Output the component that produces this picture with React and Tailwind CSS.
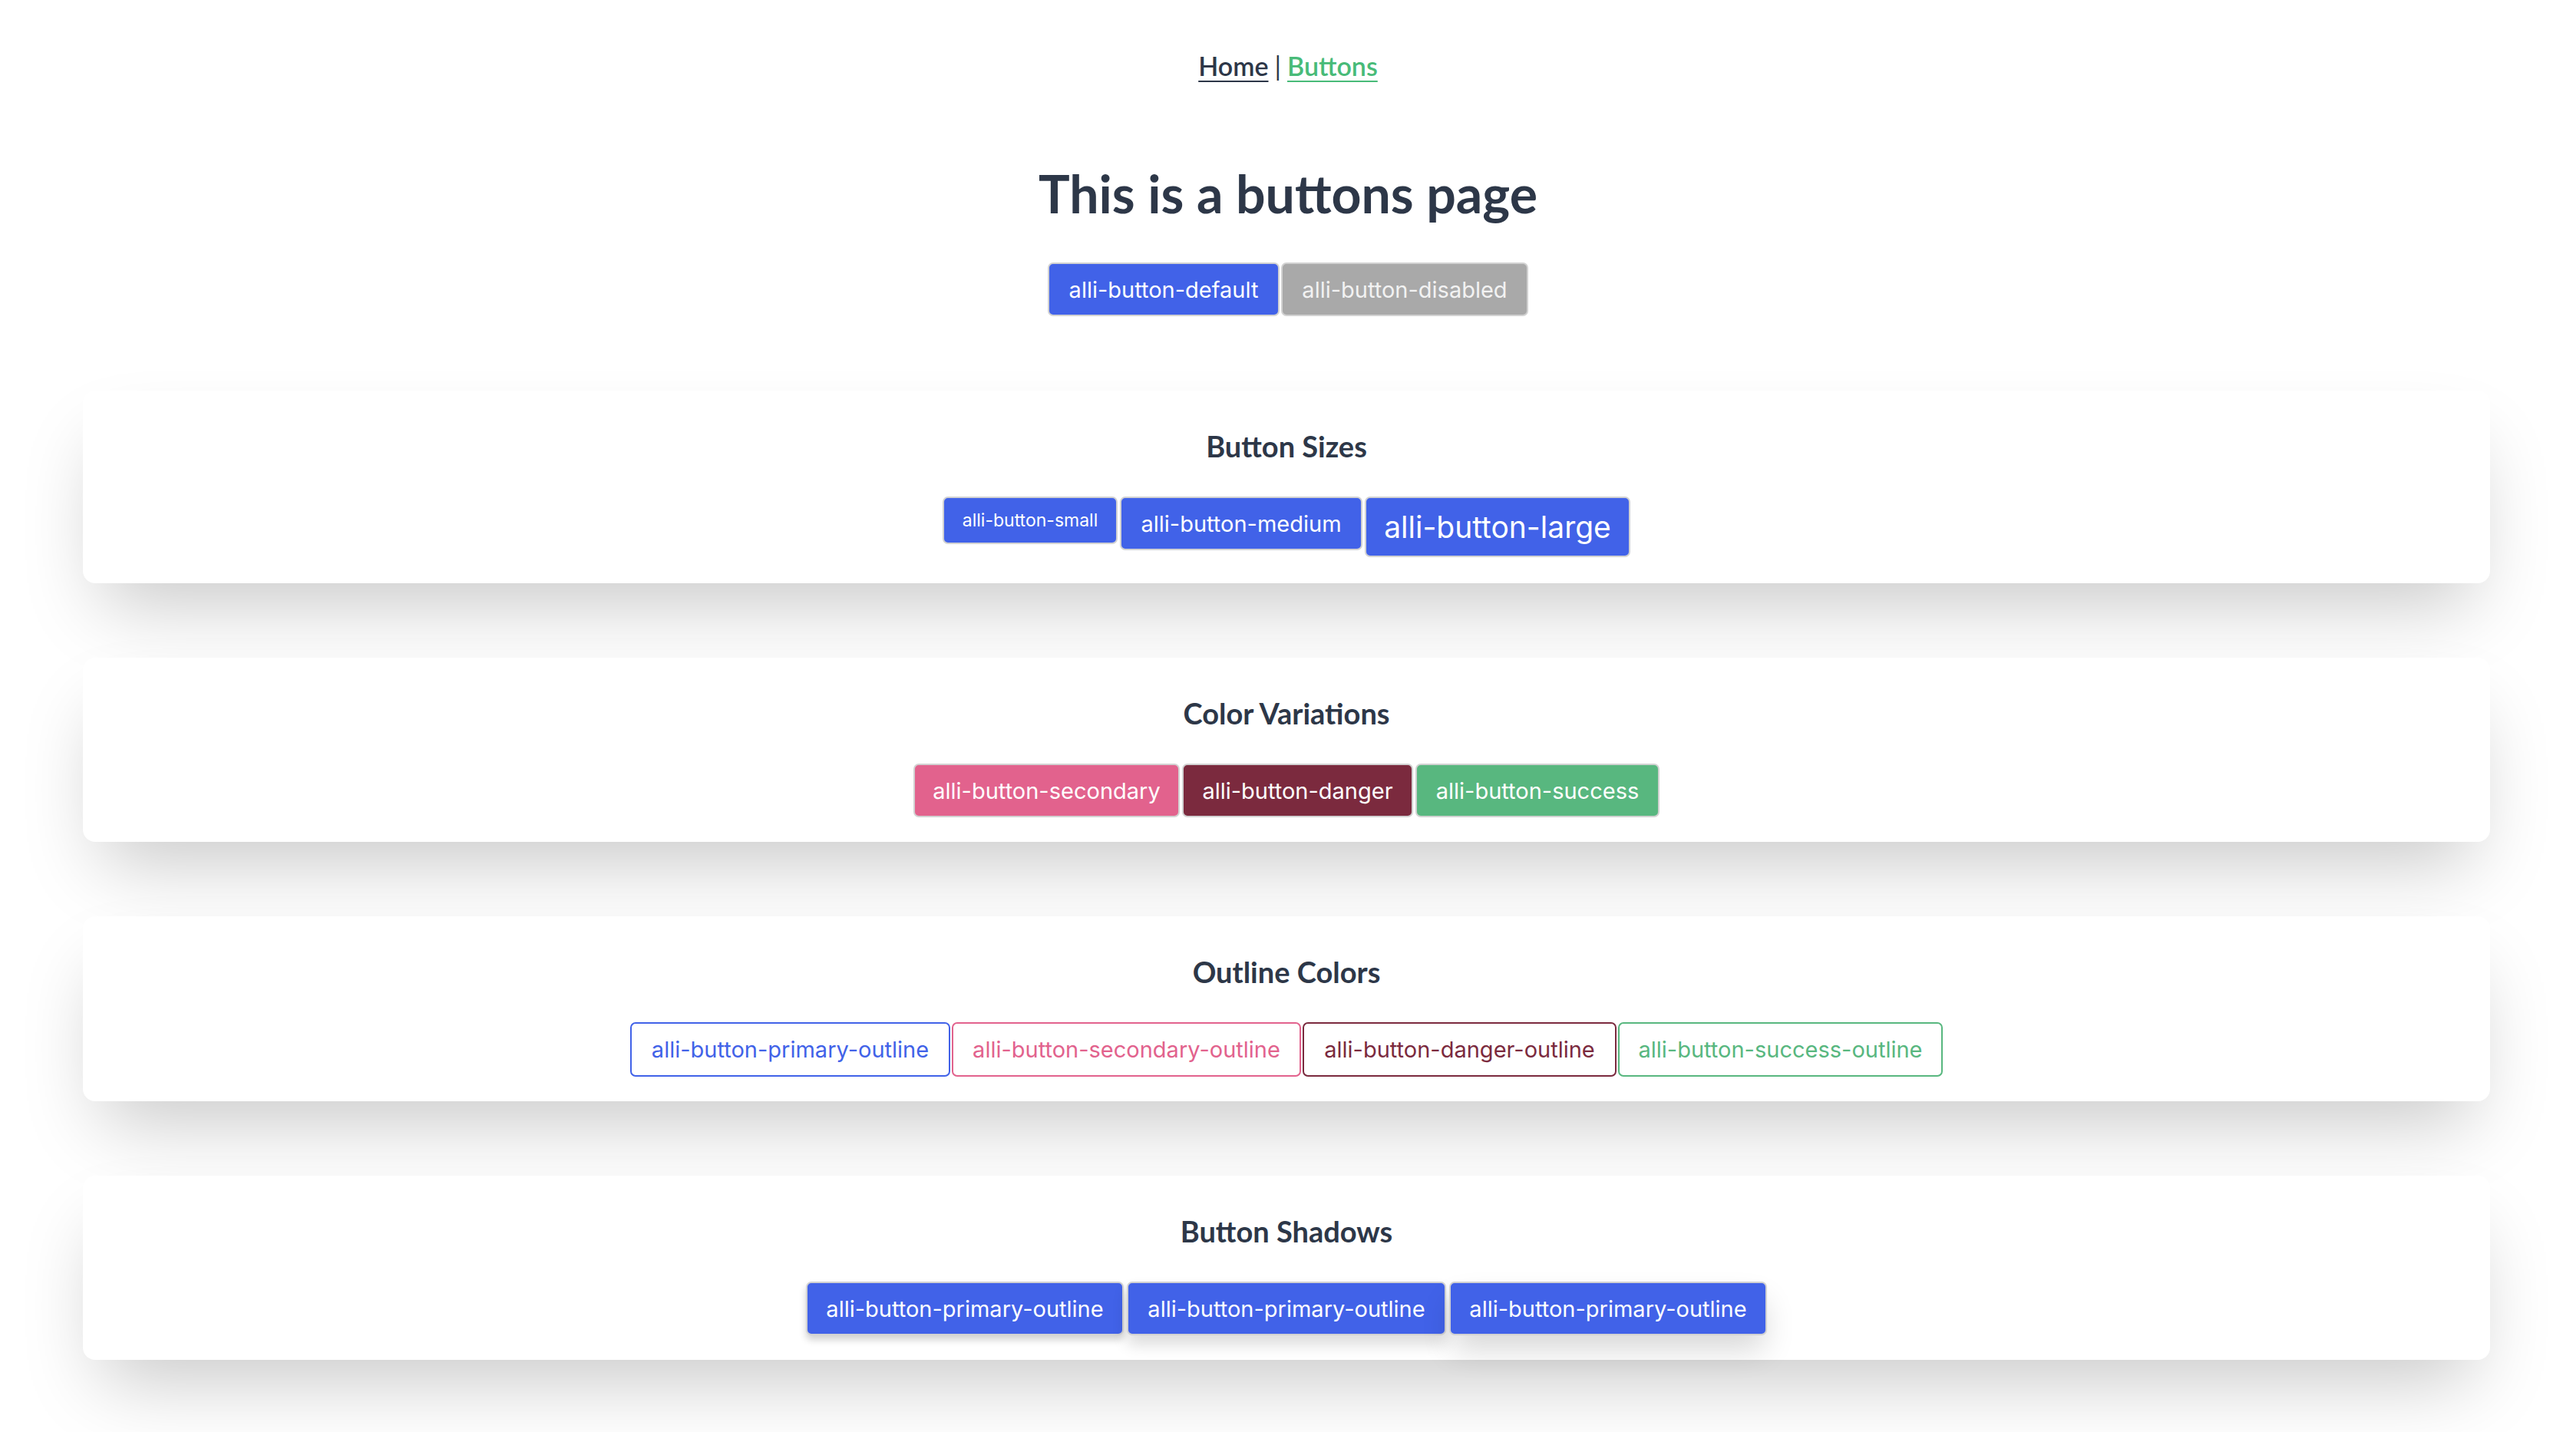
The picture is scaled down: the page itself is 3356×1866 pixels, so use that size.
import React from "react";

const btnBase =
  "flex items-center justify-center rounded-[7px] border-2 border-[#d2d2d2] text-[29px] leading-none font-['Inter',sans-serif] whitespace-nowrap";

function Card({ title, children, className = "" }) {
  return (
    <section
      className={
        "bg-white rounded-[16px] shadow-[0_50px_100px_-24px_rgba(0,0,0,0.22)] pt-[48px] pb-[32px] " +
        className
      }
    >
      <h2 className="text-center text-[38px] leading-[48px] font-bold text-[#2d3748] font-['Lato',sans-serif]">
        {title}
      </h2>
      <div className="mt-[42px] flex justify-center items-start">{children}</div>
    </section>
  );
}

export default function App() {
  return (
    <div className="min-h-screen bg-white pb-[92px]">
      <nav className="pt-[62px] h-[110px] flex justify-center items-center text-[34px] leading-[46px] font-['Lato',sans-serif] text-[#2d3748]">
        <a className="underline decoration-[2px] underline-offset-[6px] text-[#2d3748] font-semibold" href="#">
          Home
        </a>
        <span className="mx-[8px] font-normal">|</span>
        <a className="underline decoration-[2px] underline-offset-[6px] text-[#48bb78] font-semibold" href="#">
          Buttons
        </a>
      </nav>

      <h1 className="mt-[102px] text-center text-[68px] leading-[80px] font-bold text-[#2d3748] font-['Lato',sans-serif]">
        This is a buttons page
      </h1>

      <div className="mt-[50px] flex justify-center gap-[2px]">
        <button className={btnBase + " w-[302px] h-[70px] bg-[#4162e8] text-white"}>alli-button-default</button>
        <button className={btnBase + " w-[322px] h-[70px] bg-[#a9a9a9] text-[#f2f2f2]"}>alli-button-disabled</button>
      </div>

      <div className="mt-[97px] ml-[108px] mr-[112px] flex flex-col gap-[97px]">
        <Card title="Button Sizes" className="pb-[34px]">
          <div className="flex items-start gap-[3px]">
            <button className={btnBase + " w-[228px] h-[62px] bg-[#4162e8] text-white !text-[23px]"}>alli-button-small</button>
            <button className={btnBase + " w-[316px] h-[70px] bg-[#4162e8] text-white"}>alli-button-medium</button>
            <button className={btnBase + " w-[346px] h-[79px] bg-[#4162e8] text-white !text-[39px]"}>alli-button-large</button>
          </div>
        </Card>

        <Card title="Color Variations">
          <div className="flex items-start gap-[3px]">
            <button className={btnBase + " w-[347px] h-[70px] bg-[#e2628d] text-white"}>alli-button-secondary</button>
            <button className={btnBase + " w-[301px] h-[70px] bg-[#7b2a3e] text-white"}>alli-button-danger</button>
            <button className={btnBase + " w-[318px] h-[70px] bg-[#58b77f] text-white"}>alli-button-success</button>
          </div>
        </Card>

        <Card title="Outline Colors">
          <div className="flex items-start gap-[2px]">
            <button className={btnBase + " w-[417px] h-[71px] bg-white !border-[#4162e8] text-[#4162e8]"}>alli-button-primary-outline</button>
            <button className={btnBase + " w-[455px] h-[71px] bg-white !border-[#e2628d] text-[#e2628d]"}>alli-button-secondary-outline</button>
            <button className={btnBase + " w-[409px] h-[71px] bg-white !border-[#7b2a3e] text-[#7b2a3e]"}>alli-button-danger-outline</button>
            <button className={btnBase + " w-[423px] h-[71px] bg-white !border-[#58b77f] text-[#58b77f]"}>alli-button-success-outline</button>
          </div>
        </Card>

        <Card title="Button Shadows">
          <div className="flex items-start gap-[4px]">
            <button className={btnBase + " w-[414px] h-[70px] bg-[#4162e8] text-white shadow-[0_6px_10px_rgba(0,0,0,0.18)]"}>alli-button-primary-outline</button>
            <button className={btnBase + " w-[416px] h-[70px] bg-[#4162e8] text-white shadow-[0_12px_20px_rgba(0,0,0,0.14)]"}>alli-button-primary-outline</button>
            <button className={btnBase + " w-[414px] h-[70px] bg-[#4162e8] text-white shadow-[0_22px_40px_-4px_rgba(0,0,0,0.16)]"}>alli-button-primary-outline</button>
          </div>
        </Card>
      </div>
    </div>
  );
}
